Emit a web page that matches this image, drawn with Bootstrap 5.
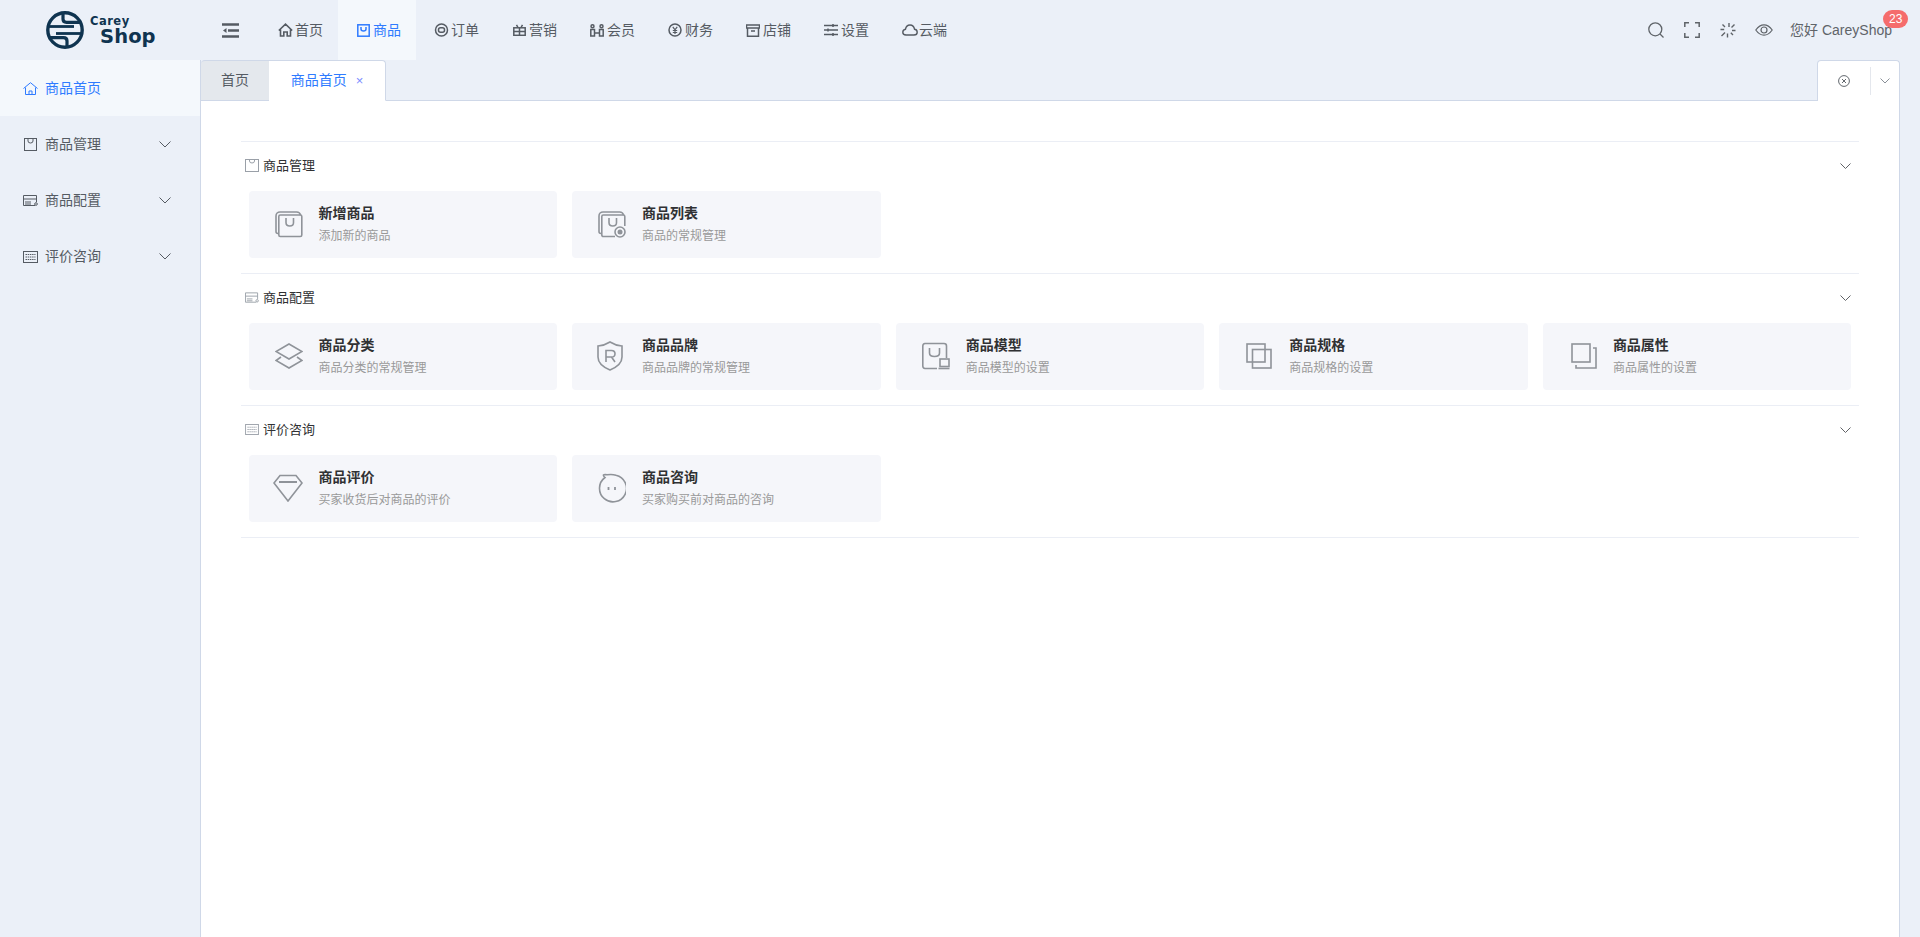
<!DOCTYPE html>
<html lang="zh">
<head>
<meta charset="utf-8">
<title>商品首页</title>
<link href="https://cdn.jsdelivr.net/npm/bootstrap@5.3.0/dist/css/bootstrap.min.css" rel="stylesheet">
<style>
:root{--cs-bg:#ebf0f8;--cs-line:#cfd8e8;--cs-blue:#2f7bff;--cs-text:#555b63;}
html,body{height:100%;}
body{font-family:"Liberation Sans","Noto Sans CJK SC",sans-serif;font-size:14px;background:var(--cs-bg);color:var(--cs-text);overflow:hidden;}
svg{display:block;flex:none;fill:none;stroke:currentColor;}
.cs-shell{height:937px;}
.cs-head{height:60px;}
.cs-logo{width:200px;padding-left:46px;color:#0f3450;}
.cs-logotext{margin-left:6px;font-family:"DejaVu Sans",sans-serif;font-weight:700;padding-top:1px;}
.cs-logotext span{display:block;}
.cs-l1{font-size:11.5px;line-height:11px;letter-spacing:.5px;}
.cs-l2{font-size:19.5px;line-height:19px;margin-left:10px;letter-spacing:.1px;}
.cs-toggle{width:60px;padding-left:22px;color:#555b63;}
.cs-topitem{width:78px;height:60px;padding-left:18px;color:var(--cs-text);text-decoration:none;}
.cs-topico{width:17px;flex:none;}
.cs-topitem.cs-on{background:#f4f8fc;color:var(--cs-blue);}
.cs-tools{color:#5f6469;padding-right:28px;}
.cs-tool{margin-right:20px;}
.cs-tool-mid{margin-right:19px;}
.cs-tool-last{margin-right:17px;}
.cs-hello{position:relative;font-size:14px;color:#5f6469;}
.cs-count{position:absolute;left:93px;top:-10px;height:18px;line-height:18px;padding:0 6px;border-radius:10px;background:#f56c6c;color:#fff;font-size:12px;}
.cs-side{width:201px;border-right:1px solid var(--cs-line);flex:none;}
.cs-sideitem{height:56px;padding:1px 29px 0 23px;color:var(--cs-text);text-decoration:none;}
.cs-sideitem .cs-sidelabel{margin-left:7px;flex:1;}
.cs-sideitem.cs-on{background:#f4f8fc;color:var(--cs-blue);}
.cs-sideico{width:15px;}
.cs-main{min-width:0;padding-right:20px;}
.cs-tabs{height:41px;border-bottom:1px solid var(--cs-line);}
.cs-tab{height:41px;line-height:38px;border:1px solid var(--cs-line);border-left:0;text-align:center;text-decoration:none;color:var(--cs-text);}
.cs-tab1{width:68px;background:#e4e8ed;border-right:0;height:40px;border-bottom:0;border-top-left-radius:4px;}
.cs-tab2{width:117px;background:#fff;color:var(--cs-blue);border-bottom-color:#fff;border-top-right-radius:4px;}
.cs-tabx{font-size:13px;margin-left:9px;color:#7d8cff;}
.cs-tabtool{width:83px;height:41px;background:#fff;border:1px solid var(--cs-line);border-bottom:0;border-radius:4px 4px 0 0;color:#63686e;}
.cs-tabtool>div{height:28px;}
.cs-tabtool-a{width:53px;border-right:1px solid #e4e7ed;}
.cs-tabtool-b{width:28px;color:#8a9098;}
.cs-body{flex:1;background:#fff;border-right:1px solid var(--cs-line);padding:40px 40px 0;}
.cs-sect{border-top:1px solid #ebeef5;height:132px;}
.cs-sect.cs-last{border-bottom:1px solid #ebeef5;height:133px;}
.cs-secthead{height:49px;padding:0 8px 2px 4px;color:#303133;font-size:13px;}
.cs-secthead .cs-secttitle{margin-left:4px;flex:1;}
.cs-sectico{color:#9aa0a8;}
.cs-chev{color:#606266;}
.cs-cardwrap{padding:0 7.5px;}
.cs-tile{height:67px;background:#f5f6fa;border-radius:4px;padding:0 26px 2px;color:#8f9399;}
.cs-tile .cs-tileico{width:28px;margin-right:16px;}
.cs-tiletitle{font-size:14px;font-weight:700;color:#303133;line-height:20px;}
.cs-tiledesc{font-size:12px;color:#999;line-height:16px;margin-top:5px;}
.cs-nudge-l{margin-left:-2px;}
.cs-nudge-r1{margin-left:1px;}
.cs-nudge-r2{margin-left:2px;}
</style>
</head>
<body>
<div class="cs-shell d-flex flex-column">
  <header class="cs-head d-flex align-items-center">
    <div class="cs-logo d-flex align-items-center">
      <svg width="38" height="38" viewBox="0 0 38 38" stroke-width="3.2">
        <circle cx="19" cy="19" r="17.2" stroke-width="3.4"/>
        <path d="M17 2V8Q17 11.300 20.500 11.300H35.500"/>
        <path d="M2.500 15.500H28" stroke-width="2.800"/>
        <path d="M10 22.500H35.500" stroke-width="2.800"/>
        <path d="M21 36V30Q21 26.700 17.500 26.700H2.500"/>
      </svg>
      <div class="cs-logotext"><span class="cs-l1">Carey</span><span class="cs-l2">Shop</span></div>
    </div>
    <div class="cs-toggle">
      <svg width="17" height="15" viewBox="0 0 17 15" stroke-width="2.600"><path d="M0 1.500H17M6 7.500H17M0 13.500H17"/><path d="M4.500 5L1 7.500L4.500 10Z" fill="currentColor" stroke="none"/></svg>
    </div>
    <nav class="d-flex flex-grow-1">
      <a class="cs-topitem d-flex align-items-center" href="#"><span class="cs-topico"><svg width="15" height="14" viewBox="0 0 15 14" stroke-width="1.600"><path d="M.8 7.500L7.500 1.200L14.200 7.500M2.500 6.500V13H5.800V9H9.200V13H12.500V6.500"/></svg></span>首页</a>
      <a class="cs-topitem cs-on d-flex align-items-center" href="#"><span class="cs-topico"><svg class="cs-nudge-r1" width="13" height="13" viewBox="0 0 13 13" stroke-width="1.500"><rect x=".8" y=".8" width="11.400" height="11.400"/><path d="M4 3V5Q4 7 6.500 7T9 5V3"/></svg></span>商品</a>
      <a class="cs-topitem d-flex align-items-center" href="#"><span class="cs-topico"><svg width="15" height="14" viewBox="0 0 15 14" stroke-width="1.500"><circle cx="7.500" cy="7" r="6"/><rect x="4.500" y="4.800" width="6" height="4.400" rx="2"/></svg></span>订单</a>
      <a class="cs-topitem d-flex align-items-center" href="#"><span class="cs-topico"><svg class="cs-nudge-r1" width="13" height="12" viewBox="0 0 13 12" stroke-width="1.500"><rect x=".8" y="3.800" width="11.400" height="7.500"/><path d="M.8 7.500H12.200M6.500 3.800V11.300M3.500.8L5 3.500M9.500.8L8 3.500"/></svg></span>营销</a>
      <a class="cs-topitem d-flex align-items-center" href="#"><span class="cs-topico"><svg width="14" height="13" viewBox="0 0 14 13" stroke-width="1.500"><circle cx="2.500" cy="2.300" r="1.500"/><circle cx="11.500" cy="2.300" r="1.500"/><path d="M.8 5.500H4.500V12H.8ZM9.500 5.500H13.200V12H9.500ZM4.500 9H9.500"/></svg></span>会员</a>
      <a class="cs-topitem d-flex align-items-center" href="#"><span class="cs-topico"><svg width="14" height="14" viewBox="0 0 14 14" stroke-width="1.500"><circle cx="7" cy="7" r="6"/><path d="M4.800 3.800L7 6.800L9.200 3.800M4.800 7.500H9.200M4.800 9.500H9.200M7 6.800V11" stroke-width="1.200"/></svg></span>财务</a>
      <a class="cs-topitem d-flex align-items-center" href="#"><span class="cs-topico"><svg width="14" height="13" viewBox="0 0 14 13" stroke-width="1.500"><path d="M.5 1H13.500V4H.5ZM1.500 4V12.200H12.500V4M5 7H9"/></svg></span>店铺</a>
      <a class="cs-topitem d-flex align-items-center" href="#"><span class="cs-topico"><svg width="14" height="12" viewBox="0 0 14 12" stroke-width="1.400"><path d="M0 1.500H14M0 6H14M0 10.500H14"/><path d="M9 0V3M4 4.500V7.500M9 9V12" stroke-width="1.500"/></svg></span>设置</a>
      <a class="cs-topitem d-flex align-items-center" href="#"><span class="cs-topico"><svg width="16" height="12" viewBox="0 0 16 12" stroke-width="1.400"><path d="M4 11H12Q15.200 11 15.200 8.200T12.500 5.200Q11.800 1 8 1T3.500 5.200Q.8 5.600 .8 8.200T4 11Z"/></svg></span>云端</a>
    </nav>
    <div class="cs-tools d-flex align-items-center">
      <svg class="cs-tool" width="16" height="16" viewBox="0 0 16 16" stroke-width="1.300"><circle cx="7.300" cy="7.300" r="6.500"/><path d="M12 12L15.500 15.500"/></svg>
      <svg class="cs-tool" width="16" height="16" viewBox="0 0 16 16" stroke-width="1.500"><path d="M.8 5V.8H5M11 .8H15.200V5M15.200 11V15.200H11M5 15.200H.8V11"/></svg>
      <svg class="cs-tool-mid" width="16" height="16" viewBox="0 0 16 16" stroke-width="1.400"><path d="M9 1V5M14.500 2.500L11.500 5.500M15.500 8.500H12M13 13L10.800 10.800M7.500 11.500V15.500M5 10.500L1.500 14M4.200 7.500H.5M5 5L2.500 2.500"/></svg>
      <svg class="cs-tool-last" width="18" height="12" viewBox="0 0 18 12" stroke-width="1.200"><path d="M.8 6Q4.500.8 9 .8T17.200 6Q13.500 11.200 9 11.200T.8 6Z"/><circle cx="9" cy="6" r="3"/></svg>
      <div class="cs-hello">您好 CareyShop<span class="cs-count">23</span></div>
    </div>
  </header>
  <div class="d-flex flex-grow-1" style="min-height:0">
    <aside class="cs-side d-flex flex-column">
      <a class="cs-sideitem cs-on d-flex align-items-center" href="#">
        <svg class="cs-sideico" width="15" height="13" viewBox="0 0 15 13"><path d="M.5 6.500L7.500 .7L14.500 6.500M2.500 5.500V12.500H12.500V5.500M6 12.500V9H9V12.500"/></svg>
        <span class="cs-sidelabel">商品首页</span>
      </a>
      <a class="cs-sideitem d-flex align-items-center" href="#">
        <svg class="cs-sideico" width="15" height="13" viewBox="0 0 13 13"><rect x=".5" y=".5" width="12" height="12"/><path d="M4 .5V3Q4 5 6.500 5T9 3V.5"/></svg>
        <span class="cs-sidelabel">商品管理</span>
        <svg width="12" height="7" viewBox="0 0 12 7"><path d="M.5 .5L6 6L11.500 .5"/></svg>
      </a>
      <a class="cs-sideitem d-flex align-items-center" href="#">
        <svg class="cs-sideico" width="15" height="12" viewBox="0 0 15 12"><path d="M12 10.500H.5V.5H13.500V7M.5 4H13.500M2 7H8M2 9H8"/><circle cx="13" cy="9" r="1.300"/></svg>
        <span class="cs-sidelabel">商品配置</span>
        <svg width="12" height="7" viewBox="0 0 12 7"><path d="M.5 .5L6 6L11.500 .5"/></svg>
      </a>
      <a class="cs-sideitem d-flex align-items-center" href="#">
        <svg class="cs-sideico" width="15" height="12" viewBox="0 0 15 12"><rect x=".5" y=".5" width="14" height="11"/><path d="M2.500 3.500H12.500M2.500 6H12.500M2.500 8.500H12.500" stroke-dasharray="1.500 .7"/></svg>
        <span class="cs-sidelabel">评价咨询</span>
        <svg width="12" height="7" viewBox="0 0 12 7"><path d="M.5 .5L6 6L11.500 .5"/></svg>
      </a>
    </aside>
    <main class="cs-main d-flex flex-column flex-grow-1">
      <div class="cs-tabs d-flex align-items-start">
        <a class="cs-tab cs-tab1" href="#">首页</a>
        <a class="cs-tab cs-tab2" href="#">商品首页<span class="cs-tabx">×</span></a>
        <div class="cs-tabtool ms-auto d-flex align-items-center">
          <div class="cs-tabtool-a d-flex align-items-center justify-content-center"><svg width="12" height="12" viewBox="0 0 12 12"><circle cx="6" cy="6" r="5.400"/><path d="M4 4L8 8M8 4L4 8"/></svg></div>
          <div class="cs-tabtool-b d-flex align-items-center justify-content-center"><svg width="10" height="6" viewBox="0 0 10 6"><path d="M.5 .5L5 5L9.500 .5"/></svg></div>
        </div>
      </div>
      <div class="cs-body">
        <section class="cs-sect">
          <div class="cs-secthead d-flex align-items-center">
            <svg class="cs-sectico" width="14" height="13" viewBox="0 0 14 13"><rect x=".5" y=".5" width="13" height="12"/><path d="M4.500 .5V2Q4.500 4 7 4T9.500 2V.5"/></svg>
            <span class="cs-secttitle">商品管理</span>
            <svg class="cs-chev" width="11" height="6" viewBox="0 0 11 6"><path d="M.5 .5L5.500 5.500L10.500 .5"/></svg>
          </div>
          <div class="row row-cols-5 g-0">
            <div class="col cs-cardwrap"><div class="cs-tile d-flex align-items-center">
              <div class="cs-tileico"><svg width="28" height="28" viewBox="0 0 28 28" stroke-width="1.600"><path d="M3.500 23.500H3A2 2 0 0 1 1 21.500V6A4 4 0 0 1 5 2H21.500A4 4 0 0 1 25.500 5"/><rect x="3.800" y="5" width="23" height="21.500" rx="1.500"/><path d="M11 8V12.500Q11 16 14.800 16T18.500 12.500V8"/></svg></div>
              <div><div class="cs-tiletitle">新增商品</div><div class="cs-tiledesc">添加新的商品</div></div>
            </div></div>
            <div class="col cs-cardwrap"><div class="cs-tile d-flex align-items-center">
              <div class="cs-tileico"><svg width="28" height="28" viewBox="0 0 28 28" stroke-width="1.600"><path d="M3.500 23.500H3A2 2 0 0 1 1 21.500V6A4 4 0 0 1 5 2H21.500A4 4 0 0 1 25.500 5"/><path d="M17 26.500H5.300A1.500 1.500 0 0 1 3.800 25V6.500A1.500 1.500 0 0 1 5.300 5H25.300A1.500 1.500 0 0 1 26.800 6.500V16"/><path d="M11 8V12.500Q11 16 14.800 16T18.500 12.500V8"/><circle cx="22" cy="22" r="5"/><circle cx="22" cy="22" r="2.500" fill="currentColor" stroke="none"/></svg></div>
              <div><div class="cs-tiletitle">商品列表</div><div class="cs-tiledesc">商品的常规管理</div></div>
            </div></div>
          </div>
        </section>
        <section class="cs-sect">
          <div class="cs-secthead d-flex align-items-center">
            <svg class="cs-sectico" width="14" height="12" viewBox="0 0 15 12"><path d="M12 10.500H.5V.5H13.500V7M.5 4H13.500M2 7H8M2 9H8"/><circle cx="13" cy="9" r="1.300"/></svg>
            <span class="cs-secttitle">商品配置</span>
            <svg class="cs-chev" width="11" height="6" viewBox="0 0 11 6"><path d="M.5 .5L5.500 5.500L10.500 .5"/></svg>
          </div>
          <div class="row row-cols-5 g-0">
            <div class="col cs-cardwrap"><div class="cs-tile d-flex align-items-center">
              <div class="cs-tileico"><svg width="28" height="26" viewBox="0 0 28 26" stroke-width="1.600"><path d="M14 1L27 8.500L14 16L1 8.500Z"/><path d="M6 14L1 17.500L14 25L27 17.500L22 14"/></svg></div>
              <div><div class="cs-tiletitle">商品分类</div><div class="cs-tiledesc">商品分类的常规管理</div></div>
            </div></div>
            <div class="col cs-cardwrap"><div class="cs-tile d-flex align-items-center">
              <div class="cs-tileico"><svg class="cs-nudge-l" width="28" height="30" viewBox="0 0 28 30" stroke-width="1.600"><path d="M2 5Q8.500 4.500 14 1Q19.500 4.500 26 5V16Q26 24 14 29Q2 24 2 16Z"/><path d="M10 21V9.500H15.500Q19 9.500 19 12.800T15.500 16H10M15.500 16L19 21"/></svg></div>
              <div><div class="cs-tiletitle">商品品牌</div><div class="cs-tiledesc">商品品牌的常规管理</div></div>
            </div></div>
            <div class="col cs-cardwrap"><div class="cs-tile d-flex align-items-center">
              <div class="cs-tileico"><svg width="28" height="28" viewBox="0 0 28 28" stroke-width="1.600"><path d="M15 26.500H3A2.500 2.500 0 0 1 .8 24V4A2.500 2.500 0 0 1 3 1.500H22A2.500 2.500 0 0 1 24.500 4V16"/><path d="M7.500 6V11Q7.500 14.500 12.500 14.500T17.500 11V6"/><rect x="18" y="17" width="9" height="7.500"/><path d="M16.500 26.500H27.500"/></svg></div>
              <div><div class="cs-tiletitle">商品模型</div><div class="cs-tiledesc">商品模型的设置</div></div>
            </div></div>
            <div class="col cs-cardwrap"><div class="cs-tile d-flex align-items-center">
              <div class="cs-tileico"><svg class="cs-nudge-r1" width="26" height="26" viewBox="0 0 26 26" stroke-width="1.600"><rect x="1" y="1" width="18" height="18"/><rect x="6.500" y="6.500" width="18.500" height="18.500"/></svg></div>
              <div><div class="cs-tiletitle">商品规格</div><div class="cs-tiledesc">商品规格的设置</div></div>
            </div></div>
            <div class="col cs-cardwrap"><div class="cs-tile d-flex align-items-center">
              <div class="cs-tileico"><svg class="cs-nudge-r2" width="26" height="26" viewBox="0 0 26 26" stroke-width="1.600"><rect x="1" y="1" width="18" height="18"/><path d="M22 5H25V25H5V22"/></svg></div>
              <div><div class="cs-tiletitle">商品属性</div><div class="cs-tiledesc">商品属性的设置</div></div>
            </div></div>
          </div>
        </section>
        <section class="cs-sect cs-last">
          <div class="cs-secthead d-flex align-items-center">
            <svg class="cs-sectico" width="14" height="11" viewBox="0 0 15 12"><rect x=".5" y=".5" width="14" height="11"/><path d="M2.500 3.500H12.500M2.500 6H12.500M2.500 8.500H12.500" stroke-dasharray="1.500 .7"/></svg>
            <span class="cs-secttitle">评价咨询</span>
            <svg class="cs-chev" width="11" height="6" viewBox="0 0 11 6"><path d="M.5 .5L5.500 5.500L10.500 .5"/></svg>
          </div>
          <div class="row row-cols-5 g-0">
            <div class="col cs-cardwrap"><div class="cs-tile d-flex align-items-center">
              <div class="cs-tileico"><svg class="cs-nudge-l" width="30" height="28" viewBox="0 0 30 28" stroke-width="1.600"><path d="M7 1.500H23L29 9L15 27L1 9Z"/><path d="M6 8H24" stroke-width="2"/></svg></div>
              <div><div class="cs-tiletitle">商品评价</div><div class="cs-tiledesc">买家收货后对商品的评价</div></div>
            </div></div>
            <div class="col cs-cardwrap"><div class="cs-tile d-flex align-items-center">
              <div class="cs-tileico"><svg width="28" height="30" viewBox="0 0 28 30" stroke-width="1.600"><path d="M7 4.500Q3 1 9 1.800Q14 1 18 2.200A13.500 13.500 0 1 1 7 4.500Z"/><path d="M10.500 14V17M17 14V17" stroke-width="1.800"/></svg></div>
              <div><div class="cs-tiletitle">商品咨询</div><div class="cs-tiledesc">买家购买前对商品的咨询</div></div>
            </div></div>
          </div>
        </section>
      </div>
    </main>
  </div>
</div>
</body>
</html>
